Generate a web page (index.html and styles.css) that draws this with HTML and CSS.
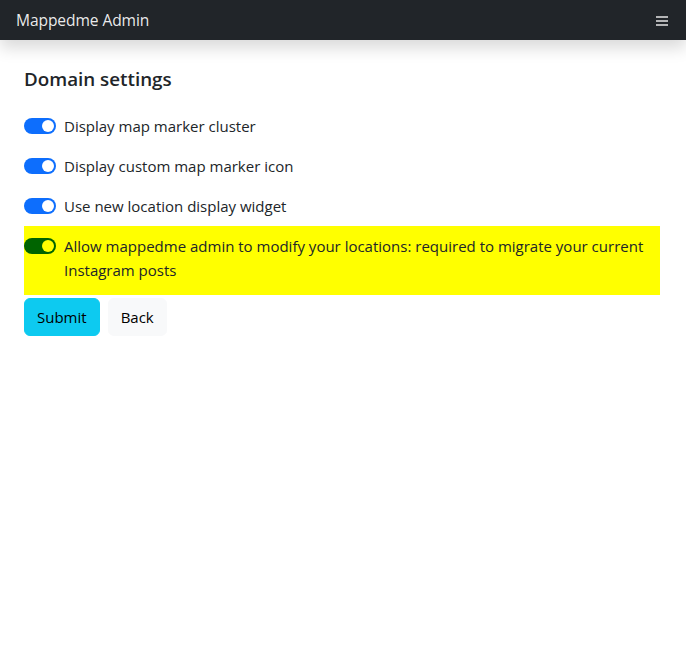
FILE: index.html
```html
<!DOCTYPE html>
<html>
<head>
<meta charset="utf-8">
<link rel="stylesheet" href="styles.css">
</head>
<body>
<nav class="navbar">
  <span class="brand">Mappedme Admin</span>
  <span class="toggler"><span></span><span></span><span></span></span>
</nav>
<main class="container">
  <h5 class="title">Domain settings</h5>
  <form class="form">
    <label class="check"><span class="switch"></span><span class="label">Display map marker cluster</span></label>
    <label class="check"><span class="switch"></span><span class="label">Display custom map marker icon</span></label>
    <label class="check"><span class="switch"></span><span class="label">Use new location display widget</span></label>
    <label class="check highlight"><span class="switch green"></span><span class="label">Allow mappedme admin to modify your locations: required to migrate your current Instagram posts</span></label>
    <div class="actions">
      <button type="button" class="btn btn-info">Submit</button>
      <button type="button" class="btn btn-light">Back</button>
    </div>
  </form>
</main>
</body>
</html>
```

FILE: styles.css
```css
* { box-sizing: border-box; }
html, body { margin: 0; padding: 0; background: #fff; }
body {
  font-family: "Open Sans", "Noto Sans", sans-serif;
  font-size: 15px;
  line-height: 24px;
  color: #212529;
}
.navbar {
  height: 40px;
  background: #212529;
  display: flex;
  align-items: center;
  justify-content: space-between;
  padding: 0 18px 0 16px;
  box-shadow: 0 8px 16px rgba(0,0,0,0.15);
  position: relative;
}
.brand {
  color: rgba(255,255,255,0.92);
  font-size: 15.6px;
  letter-spacing: -0.1px;
}
.toggler {
  display: flex;
  flex-direction: column;
  gap: 2px;
  width: 12px;
  margin-top: 1px;
}
.toggler span {
  display: block;
  height: 2px;
  background: #b4b5b6;
}
.container {
  padding: 27px 26px 0 24px;
}
.title {
  margin: 0 0 15px 0;
  font-size: 18.8px;
  line-height: 24px;
  font-weight: 600;
}
.form { display: flex; flex-direction: column; }
.check {
  display: flex;
  align-items: flex-start;
  gap: 8px;
  padding: 8px 0;
}
.switch {
  flex: none;
  width: 32px;
  height: 16px;
  margin-top: 4px;
  border-radius: 8px;
  background: #0d6efd;
  position: relative;
}
.switch::after {
  content: "";
  position: absolute;
  right: 2px;
  top: 2px;
  width: 12px;
  height: 12px;
  border-radius: 50%;
  background: #fff;
}
.switch.green { background: #006400; }
.switch.green::after { background: #ffff00; }
.highlight {
  background: #ffff00;
  padding: 8px 0 13px 0;
}
.actions {
  display: flex;
  gap: 8px;
  margin-top: 3px;
}
.btn {
  font-family: inherit;
  font-size: 15px;
  line-height: 24px;
  padding: 6px 12px;
  border: 1px solid transparent;
  border-radius: 6px;
  color: #000;
}
.btn-info { background: #0dcaf0; border-color: #0dcaf0; }
.btn-light { background: #f8f9fa; border-color: #f8f9fa; }
```
